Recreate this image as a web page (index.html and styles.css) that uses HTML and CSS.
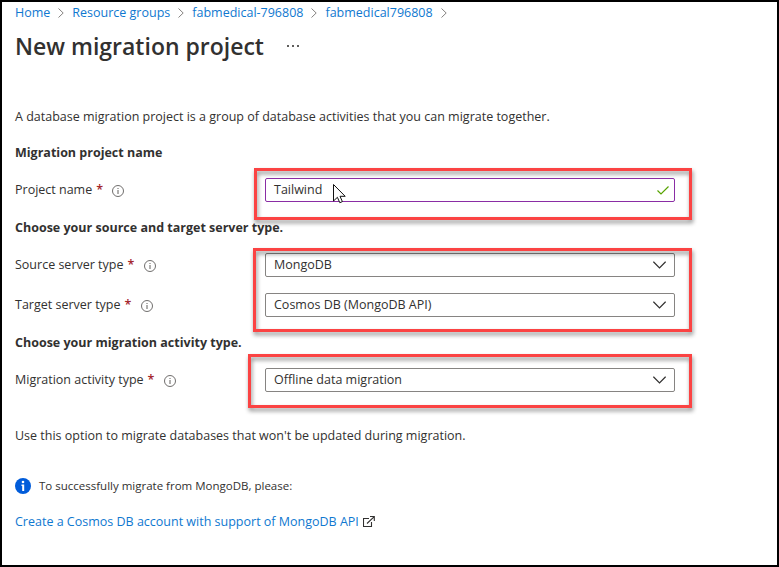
FILE: index.html
```html
<!DOCTYPE html>
<html lang="en">
<head>
<meta charset="utf-8">
<title>New migration project</title>
<link rel="stylesheet" href="styles.css">
</head>
<body>
<svg class="defs" aria-hidden="true">
  <symbol id="info" viewBox="0 0 12 12"><circle cx="6" cy="6" r="5.5" fill="none" stroke="#605e5c" stroke-width=".9"/><path d="M6 5v4M6 3v1" stroke="#605e5c" stroke-width="1"/></symbol>
  <symbol id="crumb" viewBox="0 0 6 10"><path d="M.5.5 5.2 5 .5 9.500" fill="none" stroke="#858381" stroke-width="1"/></symbol>
  <symbol id="down" viewBox="0 0 13 8"><path d="M.4.700 6.500 6.800 12.600.700" fill="none" stroke="#323130" stroke-width="1.200"/></symbol>
</svg>
<main class="page">
  <nav class="breadcrumb">
    <a class="c1">Home</a><svg><use href="#crumb"/></svg>
    <a class="c2">Resource groups</a><svg><use href="#crumb"/></svg>
    <a class="c3">fabmedical-796808</a><svg><use href="#crumb"/></svg>
    <a class="c4">fabmedical796808</a><svg><use href="#crumb"/></svg>
  </nav>
  <header class="title"><h1>New migration project</h1><span class="more"><i></i><i></i><i></i></span></header>
  <p class="intro">A database migration project is a group of database activities that you can migrate together.</p>

  <h2 class="h-name">Migration project name</h2>
  <section class="group">
    <div class="row">
      <label class="l-project">Project name</label><b class="req">*</b><svg class="info"><use href="#info"/></svg>
      <div class="field active"><span class="v-name">Tailwind</span><svg class="check" viewBox="0 0 12 9"><path d="M.5 4.500 4 8 11.500.500" fill="none" stroke="#57a300" stroke-width="1.200"/></svg></div>
    </div>
    <div class="mark mark-name"></div>
    <svg class="cursor" viewBox="0 0 13 20"><path d="M.5.500V17L4.400 13.300 6.800 18.700 9.400 17.600 7 12.300H12.200Z" fill="#fff" stroke="#111" stroke-width="1"/></svg>
  </section>

  <h2 class="h-server">Choose your source and target server type.</h2>
  <section class="group">
    <div class="row">
      <label class="l-source">Source server type</label><b class="req">*</b><svg class="info"><use href="#info"/></svg>
      <div class="field"><span class="v-source">MongoDB</span><svg class="down"><use href="#down"/></svg></div>
    </div>
    <div class="row">
      <label class="l-target">Target server type</label><b class="req">*</b><svg class="info"><use href="#info"/></svg>
      <div class="field"><span class="v-target">Cosmos DB (MongoDB API)</span><svg class="down"><use href="#down"/></svg></div>
    </div>
    <div class="mark mark-server"></div>
  </section>

  <h2 class="h-activity">Choose your migration activity type.</h2>
  <section class="group">
    <div class="row">
      <label class="l-activity">Migration activity type</label><b class="req">*</b><svg class="info"><use href="#info"/></svg>
      <div class="field"><span class="v-activity">Offline data migration</span><svg class="down"><use href="#down"/></svg></div>
    </div>
    <div class="mark mark-activity"></div>
  </section>

  <p class="hint">Use this option to migrate databases that won't be updated during migration.</p>
  <p class="notice"><svg viewBox="0 0 16 16"><circle cx="8" cy="8" r="8" fill="#015cda"/><circle cx="8" cy="4" r="1.300" fill="#fff"/><path d="M6.500 6.500H9.200V13H7.200V8H6.500Z" fill="#fff"/></svg><span>To successfully migrate from MongoDB, please:</span></p>
  <p class="link"><a>Create a Cosmos DB account with support of MongoDB API</a><svg viewBox="0 0 12 12"><path d="M6 2.500H.5V10.500H8.500V6M4 7.500 11 .800M7 .500H11.300V5" fill="none" stroke="#323130" stroke-width="1.100"/></svg></p>
</main>
</body>
</html>
```
FILE: styles.css
```css
* { box-sizing: border-box; }
body { margin: 0; }
h1, h2, p { margin: 0; }
svg { flex: none; display: block; }
.defs { position: absolute; width: 0; height: 0; }
.page {
  width: 779px; height: 567px; overflow: hidden;
  border: 2px solid #000; padding-left: 13px; background: #fff;
  font: 12.5px/20px "Open Sans", "Noto Sans", sans-serif; color: #323130;
  white-space: nowrap;
}
a { color: #0f78d0; }
.breadcrumb { display: flex; align-items: center; height: 21px; }
.breadcrumb svg { width: 6px; height: 10px; margin: 1px 8px 0; }
.title { display: flex; align-items: center; height: 46px; }
h1 { font-size: 23px; font-weight: 600; line-height: 30px; width: 272px; }
.more { display: flex; gap: 3px; }
.more i { width: 2px; height: 2px; background: #605e5c; }
.intro { margin-top: 38px; }
h2 { font-size: 12.500px; line-height: 20px; font-weight: 700; margin: 16px 0 15px; }
.group { position: relative; display: flex; flex-direction: column; gap: 16px; }
.row { display: flex; align-items: center; width: 660px; height: 24px; }
.req { color: #a4262c; width: 6px; margin: 0 10px 0 4px; font-weight: 600; }
.info { width: 12px; height: 12px; margin-top: 2px; }
.field {
  display: flex; align-items: center; justify-content: space-between;
  width: 410px; height: 24px; margin-left: auto; padding: 0 8px;
  border: 1px solid #868482; border-radius: 2px;
}
.active { border-color: #8a2da5; padding-right: 5px; }
.check { width: 12px; height: 9px; }
.down { width: 13px; height: 8px; }
.mark {
  position: absolute; border: 3px solid #fb4343;
  filter: drop-shadow(1px 3px 2px rgba(0, 0, 0, .45));
}
.mark-name { left: 239px; top: -10px; width: 438px; height: 52px; }
.mark-server { left: 238px; top: -5px; width: 439px; height: 84px; }
.mark-activity { left: 233px; top: -14px; width: 444px; height: 54px; }
.cursor { position: absolute; left: 318px; top: 6px; width: 13px; height: 20px; }
.hint { margin-top: 34px; }
.notice { display: flex; align-items: center; gap: 8px; margin-top: 30px; font-size: 11.500px; }
.notice svg { width: 16px; height: 16px; }
.link { display: flex; align-items: center; gap: 4px; margin-top: 16px; }
.link svg { width: 12px; height: 12px; }
```
